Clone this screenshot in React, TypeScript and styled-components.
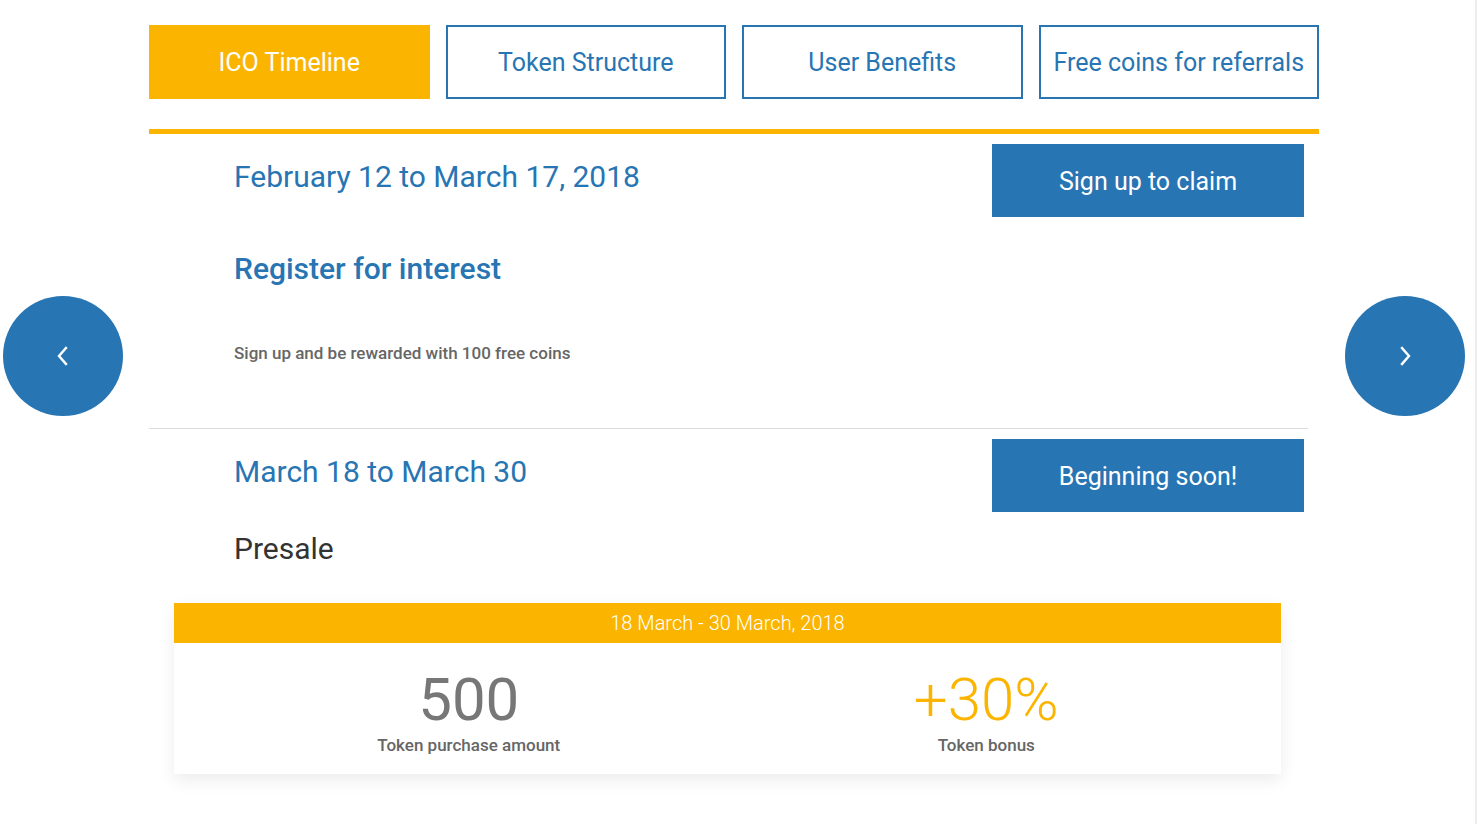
import React from "react";
import styled, { createGlobalStyle } from "styled-components";

const BLUE = "#2775b3";
const YELLOW = "#fbb500";

const Global = createGlobalStyle`
  html, body { margin: 0; padding: 0; background: #fff; }
  body { font-family: Roboto, "Liberation Sans", Arial, sans-serif; }
  * { box-sizing: border-box; }
`;

const Viewport = styled.div`
  position: relative;
  min-height: 824px;
  border-right: 2px solid #ececec;
`;

const Page = styled.div`
  width: 1170px;
  margin-left: 149px;
  padding-top: 25px;
`;

const Tabs = styled.nav`
  display: grid;
  grid-template-columns: repeat(4, 1fr);
  gap: 16px;
`;

const Tab = styled.button<{ $active?: boolean }>`
  height: 74px;
  font-family: Roboto, "Liberation Sans", Arial, sans-serif;
  font-size: 25px;
  font-weight: 400;
  cursor: pointer;
  background: ${(p) => (p.$active ? YELLOW : "#fff")};
  color: ${(p) => (p.$active ? "#fff" : BLUE)};
  border: 2px solid ${(p) => (p.$active ? YELLOW : BLUE)};
  padding: 0;
`;

const Rule = styled.div`
  height: 5px;
  background: ${YELLOW};
  margin-top: 30px;
`;

const Row = styled.section`
  display: grid;
  grid-template-columns: 1fr 312px;
  align-items: start;
  padding: 10px 15px 0 85px;
`;

const Info = styled.div`
  display: flex;
  flex-direction: column;
`;

const DateLine = styled.h3`
  margin: 14px 0 0;
  font-size: 30px;
  line-height: 38px;
  font-weight: 400;
  color: ${BLUE};
`;

const Title = styled.h2<{ $dark?: boolean; $gap: number }>`
  margin: ${(p) => p.$gap}px 0 0;
  font-size: 30px;
  line-height: 36px;
  font-weight: ${(p) => (p.$dark ? 400 : 500)};
  color: ${(p) => (p.$dark ? "#333" : BLUE)};
`;

const Desc = styled.p`
  margin: 54px 0 0;
  font-size: 17px;
  line-height: 24px;
  font-weight: 500;
  color: #666;
`;

const ActionButton = styled.button`
  width: 312px;
  height: 73px;
  border: none;
  background: ${BLUE};
  color: #fff;
  font-family: Roboto, "Liberation Sans", Arial, sans-serif;
  font-size: 25px;
  font-weight: 400;
  padding-top: 2px;
  cursor: pointer;
`;

const Divider = styled.hr`
  border: none;
  height: 1px;
  background: #dcdcdc;
  margin: 63px 11px 0 0;
`;

const Card = styled.div`
  width: 1107px;
  margin: 36px 0 0 25px;
  box-shadow: 0 6px 16px rgba(0, 0, 0, 0.08);
`;

const CardHead = styled.div`
  height: 40px;
  background: ${YELLOW};
  color: #fff;
  font-size: 20px;
  font-weight: 300;
  display: flex;
  align-items: center;
  justify-content: center;
`;

const CardBody = styled.div`
  display: grid;
  grid-template-columns: 1fr 1fr;
  padding: 25px 36px 19px;
  background: #fff;
`;

const Stat = styled.div`
  display: flex;
  flex-direction: column;
  align-items: center;
`;

const StatValue = styled.div<{ $accent?: boolean }>`
  font-size: 60px;
  line-height: 64px;
  font-weight: ${(p) => (p.$accent ? 300 : 400)};
  color: ${(p) => (p.$accent ? YELLOW : "#777")};
`;

const StatLabel = styled.div`
  margin-top: 3px;
  font-size: 17px;
  line-height: 20px;
  font-weight: 500;
  color: #666;
`;

const Arrow = styled.button<{ $side: "left" | "right" }>`
  position: absolute;
  top: 296px;
  ${(p) => (p.$side === "left" ? "left: 3px;" : "right: 10px;")}
  width: 120px;
  height: 120px;
  border-radius: 50%;
  border: none;
  background: ${BLUE};
  display: flex;
  align-items: center;
  justify-content: center;
  cursor: pointer;
  padding: 0;
`;

const Chevron = ({ dir }: { dir: "left" | "right" }) => (
  <svg width="14" height="20" viewBox="0 0 14 20" fill="none">
    <path
      d={dir === "left" ? "M10 2 L3 10 L10 18" : "M4 2 L11 10 L4 18"}
      stroke="#fff"
      strokeWidth="2.4"
      strokeLinecap="square"
      strokeLinejoin="miter"
    />
  </svg>
);

export default function App() {
  return (
    <Viewport>
      <Global />
      <Page>
        <Tabs>
          <Tab $active>ICO Timeline</Tab>
          <Tab>Token Structure</Tab>
          <Tab>User Benefits</Tab>
          <Tab>Free coins for referrals</Tab>
        </Tabs>
        <Rule />
        <Row>
          <Info>
            <DateLine>February 12 to March 17, 2018</DateLine>
            <Title $gap={55}>Register for interest</Title>
            <Desc>Sign up and be rewarded with 100 free coins</Desc>
          </Info>
          <ActionButton>Sign up to claim</ActionButton>
        </Row>
        <Divider />
        <Row>
          <Info>
            <DateLine>March 18 to March 30</DateLine>
            <Title $dark $gap={40}>Presale</Title>
          </Info>
          <ActionButton>Beginning soon!</ActionButton>
        </Row>
        <Card>
          <CardHead>18 March - 30 March, 2018</CardHead>
          <CardBody>
            <Stat>
              <StatValue>500</StatValue>
              <StatLabel>Token purchase amount</StatLabel>
            </Stat>
            <Stat>
              <StatValue $accent>+30%</StatValue>
              <StatLabel>Token bonus</StatLabel>
            </Stat>
          </CardBody>
        </Card>
      </Page>
      <Arrow $side="left" aria-label="Previous">
        <Chevron dir="left" />
      </Arrow>
      <Arrow $side="right" aria-label="Next">
        <Chevron dir="right" />
      </Arrow>
    </Viewport>
  );
}
